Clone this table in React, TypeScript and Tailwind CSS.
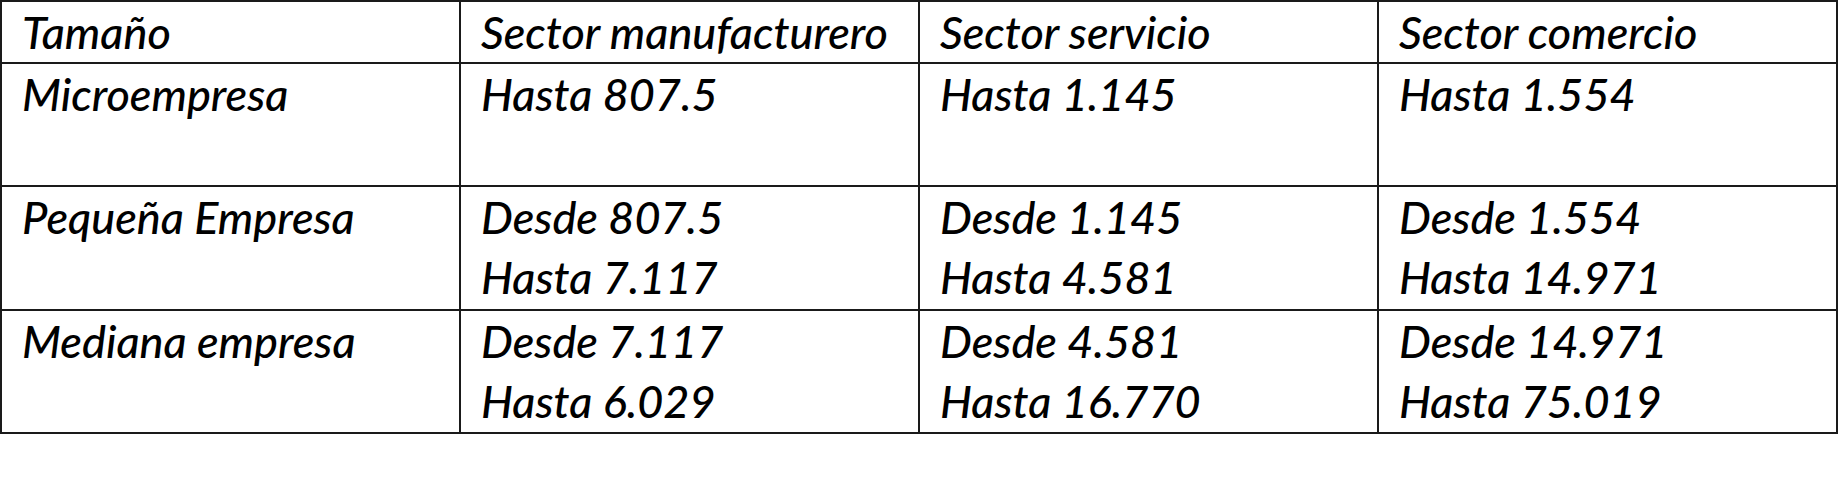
const rows: { label: string; height: string; cells: string[][] }[] = [
    {
        label: "Microempresa",
        height: "h-[123px]",
        cells: [["Hasta 807.5"], ["Hasta 1.145"], ["Hasta 1.554"]],
    },
    {
        label: "Pequeña Empresa",
        height: "h-[124px]",
        cells: [
            ["Desde 807.5", "Hasta 7.117"],
            ["Desde 1.145", "Hasta 4.581"],
            ["Desde 1.554", "Hasta 14.971"],
        ],
    },
    {
        label: "Mediana empresa",
        height: "h-[123px]",
        cells: [
            ["Desde 7.117", "Hasta 6.029"],
            ["Desde 4.581", "Hasta 16.770"],
            ["Desde 14.971", "Hasta 75.019"],
        ],
    },
];

const headers = ["Tamaño", "Sector manufacturero", "Sector servicio", "Sector comercio"];

const cell = "border-r-2 border-b-2 border-[#1a1a1a] align-top pl-[20px] pr-2 py-0";

export default function App() {
    return (
        <div
            className="w-[1838px] h-[494px] bg-white text-black"
            style={{ fontFamily: "Lato, 'Open Sans', sans-serif" }}
        >
            <table className="w-[1838px] border-separate border-spacing-0 border-l-2 border-t-2 border-[#1a1a1a] table-fixed italic font-medium text-[45px] leading-[60px]">
                <colgroup>
                    <col className="w-[459px]" />
                    <col className="w-[459px]" />
                    <col className="w-[459px]" />
                    <col className="w-[459px]" />
                </colgroup>
                <tbody>
                    <tr className="h-[62px]">
                        {headers.map((h) => (
                            <td key={h} className={cell}>
                                {h}
                            </td>
                        ))}
                    </tr>
                    {rows.map((row) => (
                        <tr key={row.label} className={row.height}>
                            <td className={cell}>{row.label}</td>
                            {row.cells.map((lines, i) => (
                                <td key={i} className={cell}>
                                    {lines.map((l) => (
                                        <div key={l}>{l}</div>
                                    ))}
                                </td>
                            ))}
                        </tr>
                    ))}
                </tbody>
            </table>
        </div>
    );
}
